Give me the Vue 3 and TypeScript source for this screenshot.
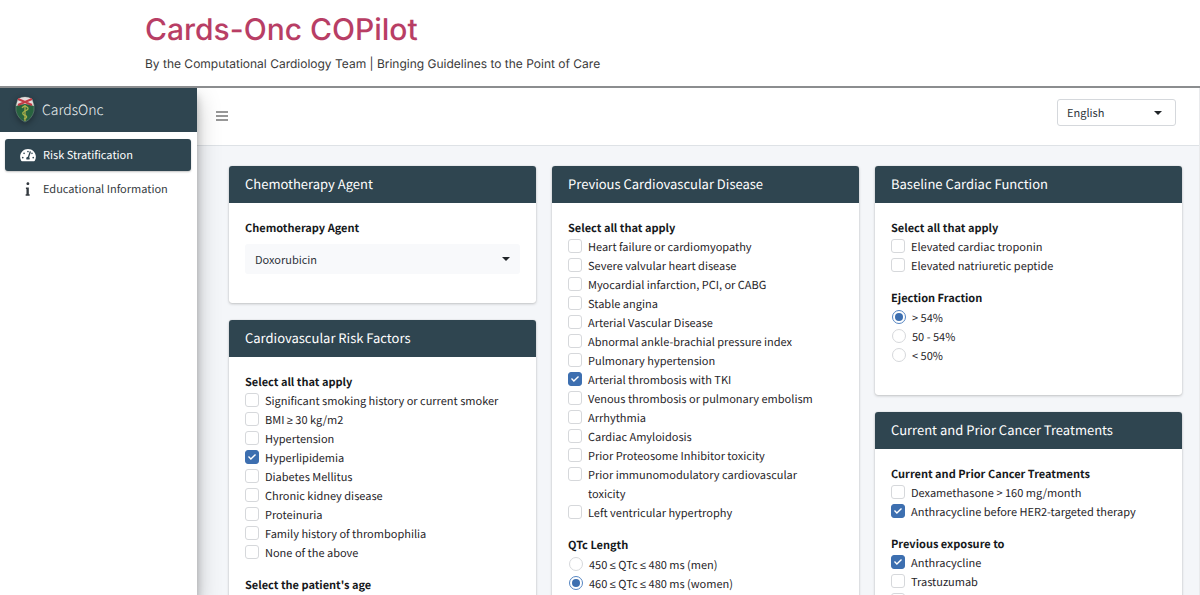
<script setup lang="ts">
import { ref } from 'vue'

interface Group {
  id: string
  title: string
  kind: 'checkbox' | 'radio' | 'select' | 'heading'
  options: string[]
  chosen: string[]
}

interface Card {
  title: string
  groups: Group[]
}

const language = ref('English')
const agent = ref('Doxorubicin')

// Splits a label so that comparison signs can take their own typeface.
const pieces = (text: string): string[] => text.split(/([≤≥])/).filter(Boolean)
const isSign = (text: string): boolean => text === '≤' || text === '≥'

const columns: Card[][] = [
  [
    {
      title: 'Chemotherapy Agent',
      groups: [
        { id: 'agent', title: 'Chemotherapy Agent', kind: 'select', options: ['Doxorubicin'], chosen: [] },
      ],
    },
    {
      title: 'Cardiovascular Risk Factors',
      groups: [
        {
          id: 'risk',
          title: 'Select all that apply',
          kind: 'checkbox',
          options: [
            'Significant smoking history or current smoker',
            'BMI ≥ 30 kg/m2',
            'Hypertension',
            'Hyperlipidemia',
            'Diabetes Mellitus',
            'Chronic kidney disease',
            'Proteinuria',
            'Family history of thrombophilia',
            'None of the above',
          ],
          chosen: ['Hyperlipidemia'],
        },
        { id: 'age', title: "Select the patient's age", kind: 'heading', options: [], chosen: [] },
      ],
    },
  ],
  [
    {
      title: 'Previous Cardiovascular Disease',
      groups: [
        {
          id: 'disease',
          title: 'Select all that apply',
          kind: 'checkbox',
          options: [
            'Heart failure or cardiomyopathy',
            'Severe valvular heart disease',
            'Myocardial infarction, PCI, or CABG',
            'Stable angina',
            'Arterial Vascular Disease',
            'Abnormal ankle-brachial pressure index',
            'Pulmonary hypertension',
            'Arterial thrombosis with TKI',
            'Venous thrombosis or pulmonary embolism',
            'Arrhythmia',
            'Cardiac Amyloidosis',
            'Prior Proteosome Inhibitor toxicity',
            'Prior immunomodulatory cardiovascular toxicity',
            'Left ventricular hypertrophy',
          ],
          chosen: ['Arterial thrombosis with TKI'],
        },
        {
          id: 'qtc',
          title: 'QTc Length',
          kind: 'radio',
          options: ['450 ≤ QTc ≤ 480 ms (men)', '460 ≤ QTc ≤ 480 ms (women)'],
          chosen: ['460 ≤ QTc ≤ 480 ms (women)'],
        },
      ],
    },
  ],
  [
    {
      title: 'Baseline Cardiac Function',
      groups: [
        {
          id: 'baseline',
          title: 'Select all that apply',
          kind: 'checkbox',
          options: ['Elevated cardiac troponin', 'Elevated natriuretic peptide'],
          chosen: [],
        },
        {
          id: 'ejection',
          title: 'Ejection Fraction',
          kind: 'radio',
          options: ['> 54%', '50 - 54%', '< 50%'],
          chosen: ['> 54%'],
        },
      ],
    },
    {
      title: 'Current and Prior Cancer Treatments',
      groups: [
        {
          id: 'treatments',
          title: 'Current and Prior Cancer Treatments',
          kind: 'checkbox',
          options: ['Dexamethasone > 160 mg/month', 'Anthracycline before HER2-targeted therapy'],
          chosen: ['Anthracycline before HER2-targeted therapy'],
        },
        {
          id: 'exposure',
          title: 'Previous exposure to',
          kind: 'checkbox',
          options: ['Anthracycline', 'Trastuzumab', ''],
          chosen: ['Anthracycline'],
        },
      ],
    },
  ],
]
</script>

<template>
  <div class="page">
    <header class="masthead">
      <h1>Cards-Onc COPilot</h1>
      <p>By the Computational Cardiology Team | Bringing Guidelines to the Point of Care</p>
    </header>

    <div class="app">
      <aside class="sidebar">
        <a class="brand" href="#">
          <svg class="crest" viewBox="0 0 20 28" aria-hidden="true">
            <path d="M3 3Q10-1 17 3Q20 9 19 15Q17 23 10 26Q3 23 1 15Q0 9 3 3Z" fill="#28633f" stroke="#6f8580" stroke-width=".6" />
            <path d="M3 3Q10-1 17 3L19 10Q10 6 1 10Z" fill="#e6dcdd" />
            <path d="M3 3L17 9M17 3L3 9" stroke="#c23a44" stroke-width="2" fill="none" />
            <path d="M10 9V25" stroke="#b9ad4e" stroke-width="1.2" />
            <path d="M7 12Q9 9 12 11Q15 13 10 15Q6 17 9 19Q13 20 11 22L9 23" stroke="#a9b34b" stroke-width="1.3" fill="none" />
          </svg>
          <span>CardsOnc</span>
        </a>
        <nav>
          <a class="nav-link active" href="#risk">
            <svg viewBox="0 0 576 512" aria-hidden="true">
              <path fill="currentColor" d="M288 32C128.940 32 0 160.940 0 320c0 52.800 14.250 102.260 39.060 144.800 5.610 9.620 16.300 15.200 27.440 15.200h443c11.140 0 21.830-5.580 27.440-15.200C561.750 422.260 576 372.800 576 320c0-159.060-128.940-288-288-288zm0 64c14.710 0 26.580 10.130 30.320 23.650-1.110 2.260-2.640 4.230-3.450 6.670l-9.220 27.670c-5.130 3.490-10.970 6.010-17.640 6.010-17.670 0-32-14.330-32-32S270.330 96 288 96zM96 384c-17.670 0-32-14.330-32-32s14.330-32 32-32 32 14.330 32 32-14.330 32-32 32zm48-160c-17.670 0-32-14.330-32-32s14.330-32 32-32 32 14.330 32 32-14.330 32-32 32zm246.770-72.410l-61.330 184C343.130 347.330 352 364.540 352 384c0 11.720-3.380 22.550-8.880 32H232.880c-5.500-9.450-8.880-20.280-8.880-32 0-33.940 26.500-61.430 59.900-63.590l61.340-184.010c4.170-12.560 17.730-19.450 30.360-15.170 12.570 4.190 19.350 17.790 15.170 30.360zm14.660 57.200l15.520-46.550c3.470-1.290 7.130-2.230 11.050-2.230 17.670 0 32 14.330 32 32s-14.330 32-32 32c-11.380-.01-20.890-6.280-26.570-15.220zM480 384c-17.670 0-32-14.330-32-32s14.330-32 32-32 32 14.330 32 32-14.330 32-32 32z" />
            </svg>
            Risk Stratification
          </a>
          <a class="nav-link" href="#education">
            <svg viewBox="-192 0 576 512" aria-hidden="true">
              <path fill="currentColor" d="M20 448h20V260H20V204h106V448h30V500H10V448ZM96 10C60 10 40 32 40 62s22 52 52 52 52-22 52-52S122 10 96 10z" />
            </svg>
            Educational Information
          </a>
        </nav>
      </aside>

      <div class="main">
        <div class="topbar">
          <button class="menu" type="button" aria-label="Toggle sidebar">
            <svg viewBox="0 0 12 10" aria-hidden="true">
              <path d="M0 1H12M0 5H12M0 9H12" stroke="#777" stroke-width="1.3" />
            </svg>
          </button>
          <span class="picker language">
            <select v-model="language" aria-label="Language">
              <option>English</option>
            </select>
          </span>
        </div>

        <main class="content">
          <div v-for="(cards, c) in columns" :key="c" class="column">
            <section v-for="card in cards" :key="card.title" class="card">
              <h2>{{ card.title }}</h2>
              <div class="card-body">
                <template v-for="group in card.groups" :key="group.id">
                  <div v-if="group.kind === 'select'" class="group">
                    <label class="group-title" :for="group.id">{{ group.title }}</label>
                    <span class="picker filled">
                      <select :id="group.id" v-model="agent">
                        <option v-for="option in group.options" :key="option">{{ option }}</option>
                      </select>
                    </span>
                  </div>
                  <fieldset v-else class="group" :class="group.kind">
                    <legend class="group-title">{{ group.title }}</legend>
                    <label v-for="option in group.options" :key="option" class="option">
                      <input
                        :type="group.kind"
                        :name="group.id"
                        :checked="group.chosen.includes(option)"
                        :aria-label="option || 'Other'"
                      />
                      <span><span v-for="(piece, p) in pieces(option)" :key="p" :class="{ sign: isSign(piece) }">{{ piece }}</span></span>
                    </label>
                  </fieldset>
                </template>
              </div>
            </section>
          </div>
        </main>
      </div>
    </div>
  </div>
</template>

<style>
body {
  margin: 0;
  background: #fff;
}
</style>

<style scoped>
.page {
  display: flex;
  flex-direction: column;
  height: 100vh;
  overflow: hidden;
  font-family: "Noto Sans CJK SC", "Source Sans Pro", sans-serif;
  font-size: 11px;
  line-height: 19px;
  color: #1f2428;
  text-rendering: geometricPrecision;
}

.page * {
  box-sizing: border-box;
}

.masthead {
  flex: none;
  padding: 10px 145px 12px;
  border-bottom: 2px solid #8b8d8f;
  font-family: Inter, "Liberation Sans", sans-serif;
}

.masthead h1 {
  margin: 0;
  font-size: 30px;
  line-height: 40px;
  font-weight: 500;
  color: #b83e65;
}

.masthead p {
  margin: 4px 0 0;
  font-size: 12px;
  line-height: 20px;
  color: #3a3a3a;
}

.app {
  flex: 1;
  display: flex;
  min-height: 0;
  overflow: hidden;
}

.sidebar {
  flex: none;
  width: 197px;
  background: #fff;
  z-index: 1;
  box-shadow: 0 11px 22px rgba(0, 0, 0, 0.25), 0 8px 8px rgba(0, 0, 0, 0.22);
}

.brand {
  display: flex;
  align-items: center;
  gap: 7px;
  height: 44px;
  padding-left: 15px;
  background: #2f4550;
  color: #eef1f2;
  font-size: 14px;
  font-weight: 300;
  text-decoration: none;
}

.crest {
  width: 20px;
  height: 28px;
  filter: drop-shadow(0 2px 3px rgba(0, 0, 0, 0.4));
}

nav {
  display: flex;
  flex-direction: column;
  gap: 2px;
  padding: 7px 6px 0 5px;
}

.nav-link {
  display: flex;
  align-items: center;
  gap: 7px;
  height: 32px;
  padding-left: 15px;
  border-radius: 3px;
  color: #343a40;
  text-decoration: none;
}

.nav-link svg {
  width: 16px;
  height: 14px;
}

.nav-link.active {
  background: #2f4550;
  color: #fff;
  box-shadow: 0 1px 2px rgba(0, 0, 0, 0.24);
}

.main {
  flex: 1;
  min-width: 0;
  background: #f4f6f9;
  border-right: 1px solid #e9eaec;
}

.topbar {
  display: flex;
  align-items: flex-start;
  justify-content: space-between;
  height: 58px;
  padding: 11px 23px 0 19px;
  background: #fff;
  border-bottom: 1px solid #dee2e6;
}

.menu {
  display: flex;
  margin-top: 12px;
  padding: 0;
  border: 0;
  background: none;
}

.menu svg {
  width: 12px;
  height: 10px;
}

.picker {
  position: relative;
  display: block;
}

.picker::after {
  content: "";
  position: absolute;
  top: 50%;
  right: 10px;
  margin-top: -2px;
  border: 4px solid transparent;
  border-top-color: #212529;
  border-bottom: 0;
  pointer-events: none;
}

.picker select {
  appearance: none;
  display: block;
  width: 100%;
  height: 30px;
  padding: 0 10px;
  border: 0;
  border-radius: 3px;
  background: #f8f9fb;
  color: #2f353b;
  font: inherit;
}

.language {
  width: 119px;
}

.language::after {
  right: 14px;
}

.language select {
  height: 27px;
  padding: 0 9px;
  border: 1px solid #d5d8dc;
  background: #fff;
}

.filled {
  margin-top: 6px;
}

.content {
  display: grid;
  grid-template-columns: repeat(3, minmax(0, 1fr));
  align-items: start;
  gap: 16px;
  padding: 20px 17px 20px 32px;
}

.column {
  display: flex;
  flex-direction: column;
  gap: 17px;
}

.card {
  border-radius: 3px;
  background: #fff;
  box-shadow: 0 0 1px rgba(0, 0, 0, 0.2), 0 1px 3px rgba(0, 0, 0, 0.2);
}

.card h2 {
  margin: 0;
  padding: 8px 16px 9px;
  border-radius: 3px 3px 0 0;
  background: #2f4550;
  color: #fff;
  font-size: 13px;
  line-height: 20px;
  font-weight: 400;
}

.card-body {
  padding: 16px;
}

.group {
  min-width: 0;
  margin: 0 0 13px;
  padding: 0;
  border: 0;
}

.group-title {
  display: block;
  padding: 0;
  font-weight: 700;
  color: #15181b;
}

.group.radio .group-title {
  margin-bottom: 1px;
}

.option {
  display: flex;
  align-items: flex-start;
  gap: 6px;
  padding-right: 12px;
}

.sign {
  font-family: "Noto Sans", sans-serif;
  line-height: 1;
}

.option input {
  appearance: none;
  flex: none;
  display: grid;
  place-items: center;
  width: 14px;
  height: 14px;
  margin: 1px 0 0;
  border: 1px solid #d6d8db;
  border-radius: 3px;
  background: #fff;
}

.option input:checked {
  border-color: #3d6fb0;
  background: #3d6fb0;
}

.option input[type="checkbox"]:checked::before {
  content: "";
  width: 8px;
  height: 6px;
  background: #fff;
  clip-path: polygon(0 50%, 12% 34%, 36% 66%, 88% 0, 100% 16%, 36% 100%);
}

.option input[type="radio"] {
  margin-left: 1px;
  border-radius: 50%;
}

.option input[type="radio"]:checked {
  border-color: #5585c2;
  background: #fff;
}

.option input[type="radio"]:checked::before {
  content: "";
  width: 8px;
  height: 8px;
  border-radius: 50%;
  background: #3d6fb0;
}
</style>
